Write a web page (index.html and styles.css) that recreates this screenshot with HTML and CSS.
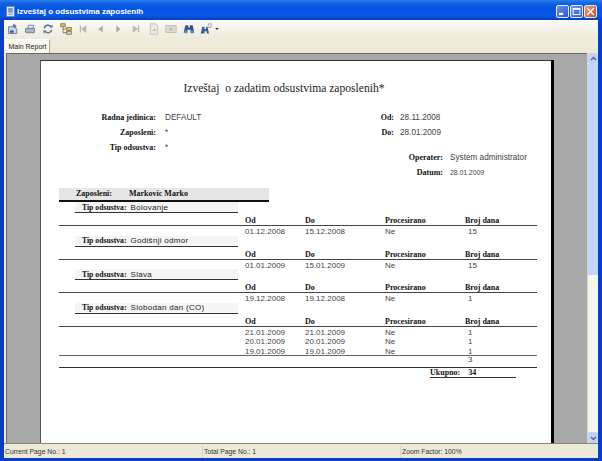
FILE: index.html
```html
<!DOCTYPE html>
<html lang="sr">
<head>
<meta charset="utf-8">
<title>Izveštaj o odsustvima zaposlenih</title>
<link rel="stylesheet" href="styles.css">
</head>
<body>
<div class="window">
  <header class="titlebar">
    <svg class="app-icon" width="11" height="13" viewBox="0 0 14 15"><rect x="2" y="1" width="10" height="13" fill="#dfe8f4" stroke="#5d7fb0"/><rect x="4" y="3" width="6" height="6" fill="#7f9cc8"/><path d="M4 11h6" stroke="#5d7fb0"/></svg>
    <span class="title">Izveštaj o odsustvima zaposlenih</span>
    <div class="win-buttons">
      <span class="wbtn"><svg viewBox="0 0 16 16"><rect x="3" y="10" width="6" height="3" fill="#fff"/></svg></span>
      <span class="wbtn"><svg viewBox="0 0 16 16"><rect x="3" y="3.500" width="10" height="9" fill="none" stroke="#fff" stroke-width="1.400"/><path d="M3 4.500h10" stroke="#fff" stroke-width="2"/></svg></span>
      <span class="wbtn close"><svg viewBox="0 0 16 16"><path d="M3 3l10 10M13 3L3 13" stroke="#fff" stroke-width="2.200"/></svg></span>
    </div>
  </header>
  <div class="body">
    <div class="toolbar">
      <svg class="tool" viewBox="0 0 16 16"><path d="M2 5h8l3 3v6H2z" fill="#c9d6e8" stroke="#4a6a94"/><path d="M9 1l4 3-2 3-4-3z" fill="#5b7fae"/><rect x="4" y="10" width="5" height="3" fill="#38618f"/></svg>
      <svg class="tool" viewBox="0 0 16 16"><rect x="2" y="7" width="12" height="6" rx="1" fill="#a9b4c4" stroke="#5e6d84"/><path d="M5 7l1-4h7l-1 4z" fill="#e9edf3" stroke="#5e6d84"/></svg>
      <svg class="tool" viewBox="0 0 16 16"><path d="M3 7a5 5 0 0 1 9-2" fill="none" stroke="#3f6ca5" stroke-width="2"/><path d="M13 9a5 5 0 0 1-9 2" fill="none" stroke="#6c7f99" stroke-width="2"/><path d="M10 6h4V2zM6 10H2v4z" fill="#3f6ca5"/></svg>
      <svg class="tool" viewBox="0 0 16 16"><rect x="1" y="1" width="6" height="4" fill="#e8c25c" stroke="#7a6a30"/><rect x="9" y="6" width="6" height="4" fill="#e8c25c" stroke="#7a6a30"/><rect x="9" y="11" width="6" height="4" fill="#d9d4b8" stroke="#7a6a30"/><path d="M4 5v8h5M4 8h5" fill="none" stroke="#555"/></svg>
      <svg class="tool" viewBox="0 0 14 14"><path d="M4 3v8M10 4v6L6 7z" fill="#b9b8af" stroke="#b9b8af" stroke-width="1.500"/></svg>
      <svg class="tool" viewBox="0 0 14 14"><path d="M9 3v8L4 7z" fill="#aaa99f"/></svg>
      <svg class="tool" viewBox="0 0 14 14"><path d="M5 3v8l5-4z" fill="#aaa99f"/></svg>
      <svg class="tool" viewBox="0 0 14 14"><path d="M10 3v8M4 4v6l4-3z" fill="#b9b8af" stroke="#b9b8af" stroke-width="1.500"/></svg>
      <svg class="tool" viewBox="0 0 16 16"><path d="M3 1h7l3 3v11H3z" fill="#ecebe2" stroke="#b7b6ac"/><path d="M6 11l3-3v2h2" fill="none" stroke="#a6a59b"/></svg>
      <svg class="tool" viewBox="0 0 14 14"><rect x="1" y="3" width="12" height="8" fill="#dddcd2" stroke="#bdbcb2"/><path d="M5 5l4 4M9 5l-4 4" stroke="#aaa99f"/></svg>
      <svg class="tool" viewBox="0 0 16 16"><path d="M3 3h4v3h2V3h4l2 10H10V9H6v4H1z" fill="#2f5797"/><circle cx="4" cy="12" r="2" fill="#6f8fc4"/><circle cx="12" cy="12" r="2" fill="#6f8fc4"/></svg>
      <svg class="tool" viewBox="0 0 16 16"><path d="M3 5h3v3h2V5h2l2 9H9v-3H6v3H1z" fill="#3a5f9d"/><path d="M11 1h4v5h-4z" fill="#dfe7f2" stroke="#6a7f9f" stroke-width=".700"/></svg>
      <svg class="caret" width="4" height="2" viewBox="0 0 5 3"><path d="M0 0h5L2.500 3z" fill="#222"/></svg>
    </div>
    <div class="tabs"><span class="tab">Main Report</span></div>
    <div class="viewer">
      <div class="canvas">
        <main class="page">
          <h1 class="report-title">Izveštaj&nbsp; o zadatim odsustvima zaposlenih*</h1>
          <section class="meta">
            <dl class="meta-col left">
              <div class="mrow"><dt>Radna jedinica:</dt><dd>DEFAULT</dd></div>
              <div class="mrow"><dt>Zaposleni:</dt><dd>*</dd></div>
              <div class="mrow"><dt>Tip odsustva:</dt><dd>*</dd></div>
            </dl>
            <div class="meta-right">
              <dl class="meta-col dates">
                <div class="mrow"><dt>Od:</dt><dd>28.11.2008</dd></div>
                <div class="mrow"><dt>Do:</dt><dd>28.01.2009</dd></div>
              </dl>
              <dl class="meta-col oper">
                <div class="mrow"><dt>Operater:</dt><dd>System administrator</dd></div>
                <div class="mrow"><dt>Datum:</dt><dd class="narrow">28.01.2009</dd></div>
              </dl>
            </div>
          </section>
          <div class="emp-band"><b class="emp-label">Zaposleni:</b><b>Markovic Marko</b></div>

          <section class="group">
            <div class="tip"><b>Tip odsustva:</b><span>Bolovanje</span></div>
            <div class="cols"><b>Od</b><b>Do</b><b>Procesirano</b><b>Broj dana</b></div>
            <div class="row"><span>01.12.2008</span><span>15.12.2008</span><span>Ne</span><span class="num">15</span></div>
          </section>
          <section class="group">
            <div class="tip"><b>Tip odsustva:</b><span>Godišnji odmor</span></div>
            <div class="cols"><b>Od</b><b>Do</b><b>Procesirano</b><b>Broj dana</b></div>
            <div class="row"><span>01.01.2009</span><span>15.01.2009</span><span>Ne</span><span class="num">15</span></div>
          </section>
          <section class="group">
            <div class="tip"><b>Tip odsustva:</b><span>Slava</span></div>
            <div class="cols"><b>Od</b><b>Do</b><b>Procesirano</b><b>Broj dana</b></div>
            <div class="row"><span>19.12.2008</span><span>19.12.2008</span><span>Ne</span><span class="num">1</span></div>
          </section>
          <section class="group last">
            <div class="tip"><b>Tip odsustva:</b><span>Slobodan dan (CO)</span></div>
            <div class="cols"><b>Od</b><b>Do</b><b>Procesirano</b><b>Broj dana</b></div>
            <div class="row"><span>21.01.2009</span><span>21.01.2009</span><span>Ne</span><span class="num">1</span></div>
            <div class="row"><span>20.01.2009</span><span>20.01.2009</span><span>Ne</span><span class="num">1</span></div>
            <div class="row"><span>19.01.2009</span><span>19.01.2009</span><span>Ne</span><span class="num">1</span></div>
          </section>
          <div class="subtotal"><span>3</span></div>
          <div class="total"><b>Ukupno:</b><b>34</b></div>
        </main>
      </div>
      <div class="scrollbar">
        <span class="arrow"><svg width="7" height="6" viewBox="0 0 7 6"><path d="M1 4l2.500-2.500L6 4" fill="none" stroke="#4d6185" stroke-width="1.300"/></svg></span>
        <span class="thumb"></span>
        <span class="track"></span>
        <span class="arrow"><svg width="7" height="6" viewBox="0 0 7 6"><path d="M1 2l2.500 2.500L6 2" fill="none" stroke="#4d6185" stroke-width="1.300"/></svg></span>
      </div>
    </div>
    <footer class="status">
      <span class="cell c1">Current Page No.: 1</span>
      <span class="cell c2">Total Page No.: 1</span>
      <span class="cell c3">Zoom Factor: 100%</span>
    </footer>
  </div>
</div>
</body>
</html>
```
FILE: styles.css
```css
* { box-sizing: border-box; margin: 0; padding: 0; }
html, body { width: 602px; height: 461px; overflow: hidden; background: #0a3fc4; }
.window { width: 602px; height: 461px; display: flex; flex-direction: column; background: #0a3fc4; font-family: "Liberation Sans", Arial, sans-serif; }

.titlebar { height: 20px; flex: none; display: flex; align-items: center; padding: 2px 5px 0 5px; background: linear-gradient(#2a80ee 0, #1263e4 3px, #0553e4 9px, #0a5ae8 15px, #0340c0 20px); }
.app-icon { margin-right: 1px; flex: none; }
.title { color: #fff; font-size: 8px; font-weight: bold; white-space: nowrap; }
.win-buttons { margin-left: auto; display: flex; gap: 1px; }
.wbtn { width: 13px; height: 13px; border-radius: 2px; border: 1px solid #dfe8fb; background: linear-gradient(135deg, #6f94ea, #2a58d0); display: flex; align-items: center; justify-content: center; overflow: hidden; }
.wbtn svg { flex: none; width: 11px; height: 11px; }
.wbtn.close { background: linear-gradient(135deg, #eb9a7c, #d4481f); }

.body { flex: 1; min-height: 0; margin: 0 4px 3px; display: flex; flex-direction: column; background: #ece9d8; }
.toolbar { height: 18px; flex: none; display: grid; grid-auto-flow: column; grid-auto-columns: 17.6px; align-items: center; justify-items: center; justify-content: start; background: linear-gradient(#fbfbf8, #f3f1e6 60%, #efecdd); }
.tool { width: 12px; height: 12px; }
.caret { justify-self: start; }

.tabs { height: 15px; flex: none; background: linear-gradient(#efecdd, #ece9d8); padding-left: 1px; display: flex; align-items: flex-end; }
.tab { height: 14px; width: 45px; background: #f8f7f0; border: 1px solid #fff; border-bottom: 0; border-right: 1px solid #aaa89a; font-size: 7px; line-height: 13px; text-align: center; color: #222; white-space: nowrap; }

.viewer { flex: 1; min-height: 0; display: flex; padding-left: 2px; background: #ece9d8; border-bottom: 1px solid #88877c; }
.canvas { flex: 1; min-width: 0; background: #a9a9a9; border-top: 1px solid #6a6a66; border-left: 1px solid #666; padding: 6px 35px 0 33px; overflow: hidden; }
.page { width: 511px; height: 383px; background: #fff; border-top: 1px solid #333; border-left: 1px solid #555; box-shadow: 3px 0 0 #000; color: #111; overflow: hidden; }
.scrollbar { width: 11px; flex: none; display: flex; flex-direction: column; background: #f6f5ee; border-left: 1px solid #d8d6c8; }
.arrow { height: 11px; flex: none; background: #c3d3f5; display: flex; align-items: center; justify-content: center; border-radius: 2px; }
.thumb { height: 211px; flex: none; background: #c5d5f7; }
.track { flex: 1; }

.report-title { font: normal 11.6px/14px "Liberation Serif", serif; text-align: center; padding: 21px 24px 0 0; height: 35px; color: #1c1c1c; white-space: nowrap; }
.meta { display: flex; height: 92px; padding-top: 14px; }
.mrow { height: 15px; display: flex; align-items: center; }
.mrow dt { font: bold 8px "Liberation Serif", serif; text-align: right; color: #111; white-space: nowrap; }
.mrow dd { font: 8.200px "Liberation Sans", sans-serif; color: #444; white-space: nowrap; }
.mrow dd.narrow { font-size: 7px; letter-spacing: -.1px; }
.left { width: 339px; flex: none; }
.left dt { width: 115px; }
.left dd { margin-left: 9px; }
.meta-right { flex: 1; }
.dates dt { width: 14px; }
.dates dd { margin-left: 6px; }
.oper { padding-top: 10px; }
.oper dt { width: 63px; }
.oper dd { margin-left: 7px; }

.emp-band { margin-left: 18px; width: 210px; height: 14px; background: #e6e6e6; border-bottom: 2px solid #111; font: bold 8px/12px "Liberation Serif", serif; display: flex; padding-left: 17px; }
.emp-label { width: 53px; }

.group { height: 33.67px; }
.group.last { height: auto; }
.tip { margin-left: 34px; width: 163px; height: 11px; padding-left: 7px; background: #f5f5f5; border-bottom: 1px solid #333; display: flex; align-items: center; gap: 4px; white-space: nowrap; }
.tip b { font: bold 7.700px "Liberation Serif", serif; }
.tip span { font: 8px "Liberation Sans", sans-serif; letter-spacing: .3px; color: #222; }

.cols, .row { display: grid; grid-template-columns: 60px 80px 80px 1fr; }
.cols { height: 13px; padding: 4px 0 0 186px; margin-left: 18px; width: 478px; border-bottom: 1px solid #444; font: bold 8px/8px "Liberation Serif", serif; }
.row { margin-left: 204px; height: 9.500px; font: 8px/11px "Liberation Sans", sans-serif; color: #444; }
.num { padding-left: 3px; }

.subtotal { margin-left: 18px; width: 478px; height: 13px; padding-left: 409px; border-top: 1px solid #666; border-bottom: 1px solid #333; font: 8px/8px "Liberation Sans", sans-serif; color: #444; }
.total { margin-left: 389px; width: 86px; height: 10px; border-bottom: 1px solid #333; font: bold 8px/9px "Liberation Serif", serif; display: flex; gap: 8px; }

.status { height: 12px; flex: none; display: flex; font-size: 6.800px; line-height: 12px; color: #333; margin-top: 2px; }
.cell { white-space: nowrap; padding-left: 1px; border-right: 1px solid #d8d5c3; }
.c1 { width: 199px; }
.c2 { width: 198px; }
.c3 { flex: 1; border-right: 0; }
```
